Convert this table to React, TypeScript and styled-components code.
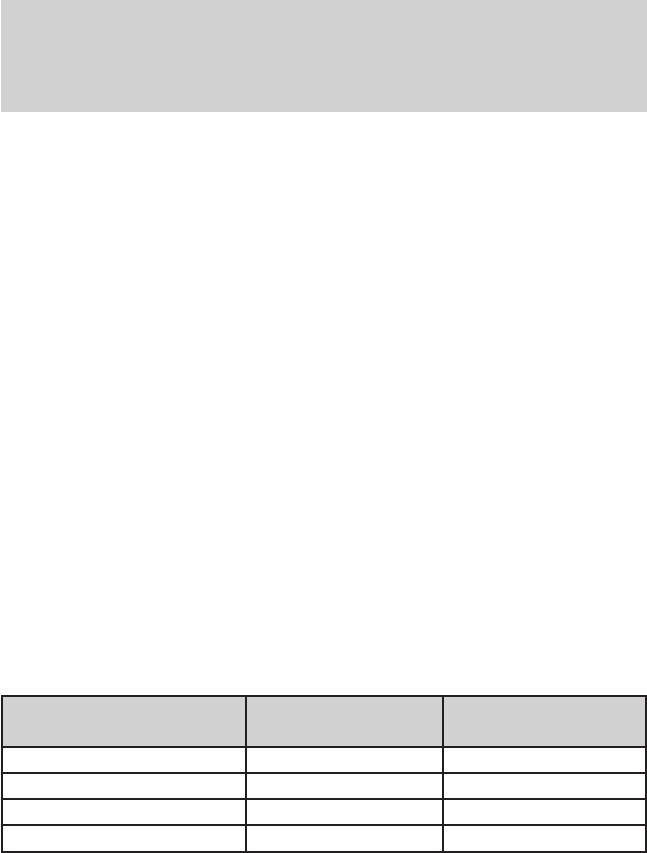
import styled, { createGlobalStyle } from "styled-components";

const GlobalStyle = createGlobalStyle`
    html, body {
        margin: 0;
        padding: 0;
        background-color: #ffffff;
        font-family: "Liberation Sans", Arial, sans-serif;
    }
`;

const Page = styled.div`
    width: 647px;
    height: 853px;
    display: flex;
    flex-direction: column;
    overflow: hidden;
`;

const Banner = styled.header`
    height: 112px;
    margin-left: 1px;
    background-color: #d1d1d1;
`;

const Table = styled.div`
    margin-top: auto;
    margin-left: 1px;
    display: grid;
    grid-template-columns: 242px 195px 201px;
    grid-template-rows: 49px 24px 24px 24px 25px;
    gap: 2px;
    padding: 2px;
    background-color: #231f20;
`;

const Cell = styled.div<{ $head?: boolean }>`
    background-color: ${p => (p.$head ? "#d1d1d1" : "#ffffff")};
    font-size: 12px;
    color: #231f20;
`;

const rows = [0, 1, 2, 3];
const cols = [0, 1, 2];

function App() {
    return (
        <>
            <GlobalStyle />
            <Page>
                <Banner />
                <Table>
                    {cols.map(c => (
                        <Cell key={`h${c}`} $head />
                    ))}
                    {rows.map(r =>
                        cols.map(c => <Cell key={`${r}-${c}`} />)
                    )}
                </Table>
            </Page>
        </>
    );
}

export default App;
